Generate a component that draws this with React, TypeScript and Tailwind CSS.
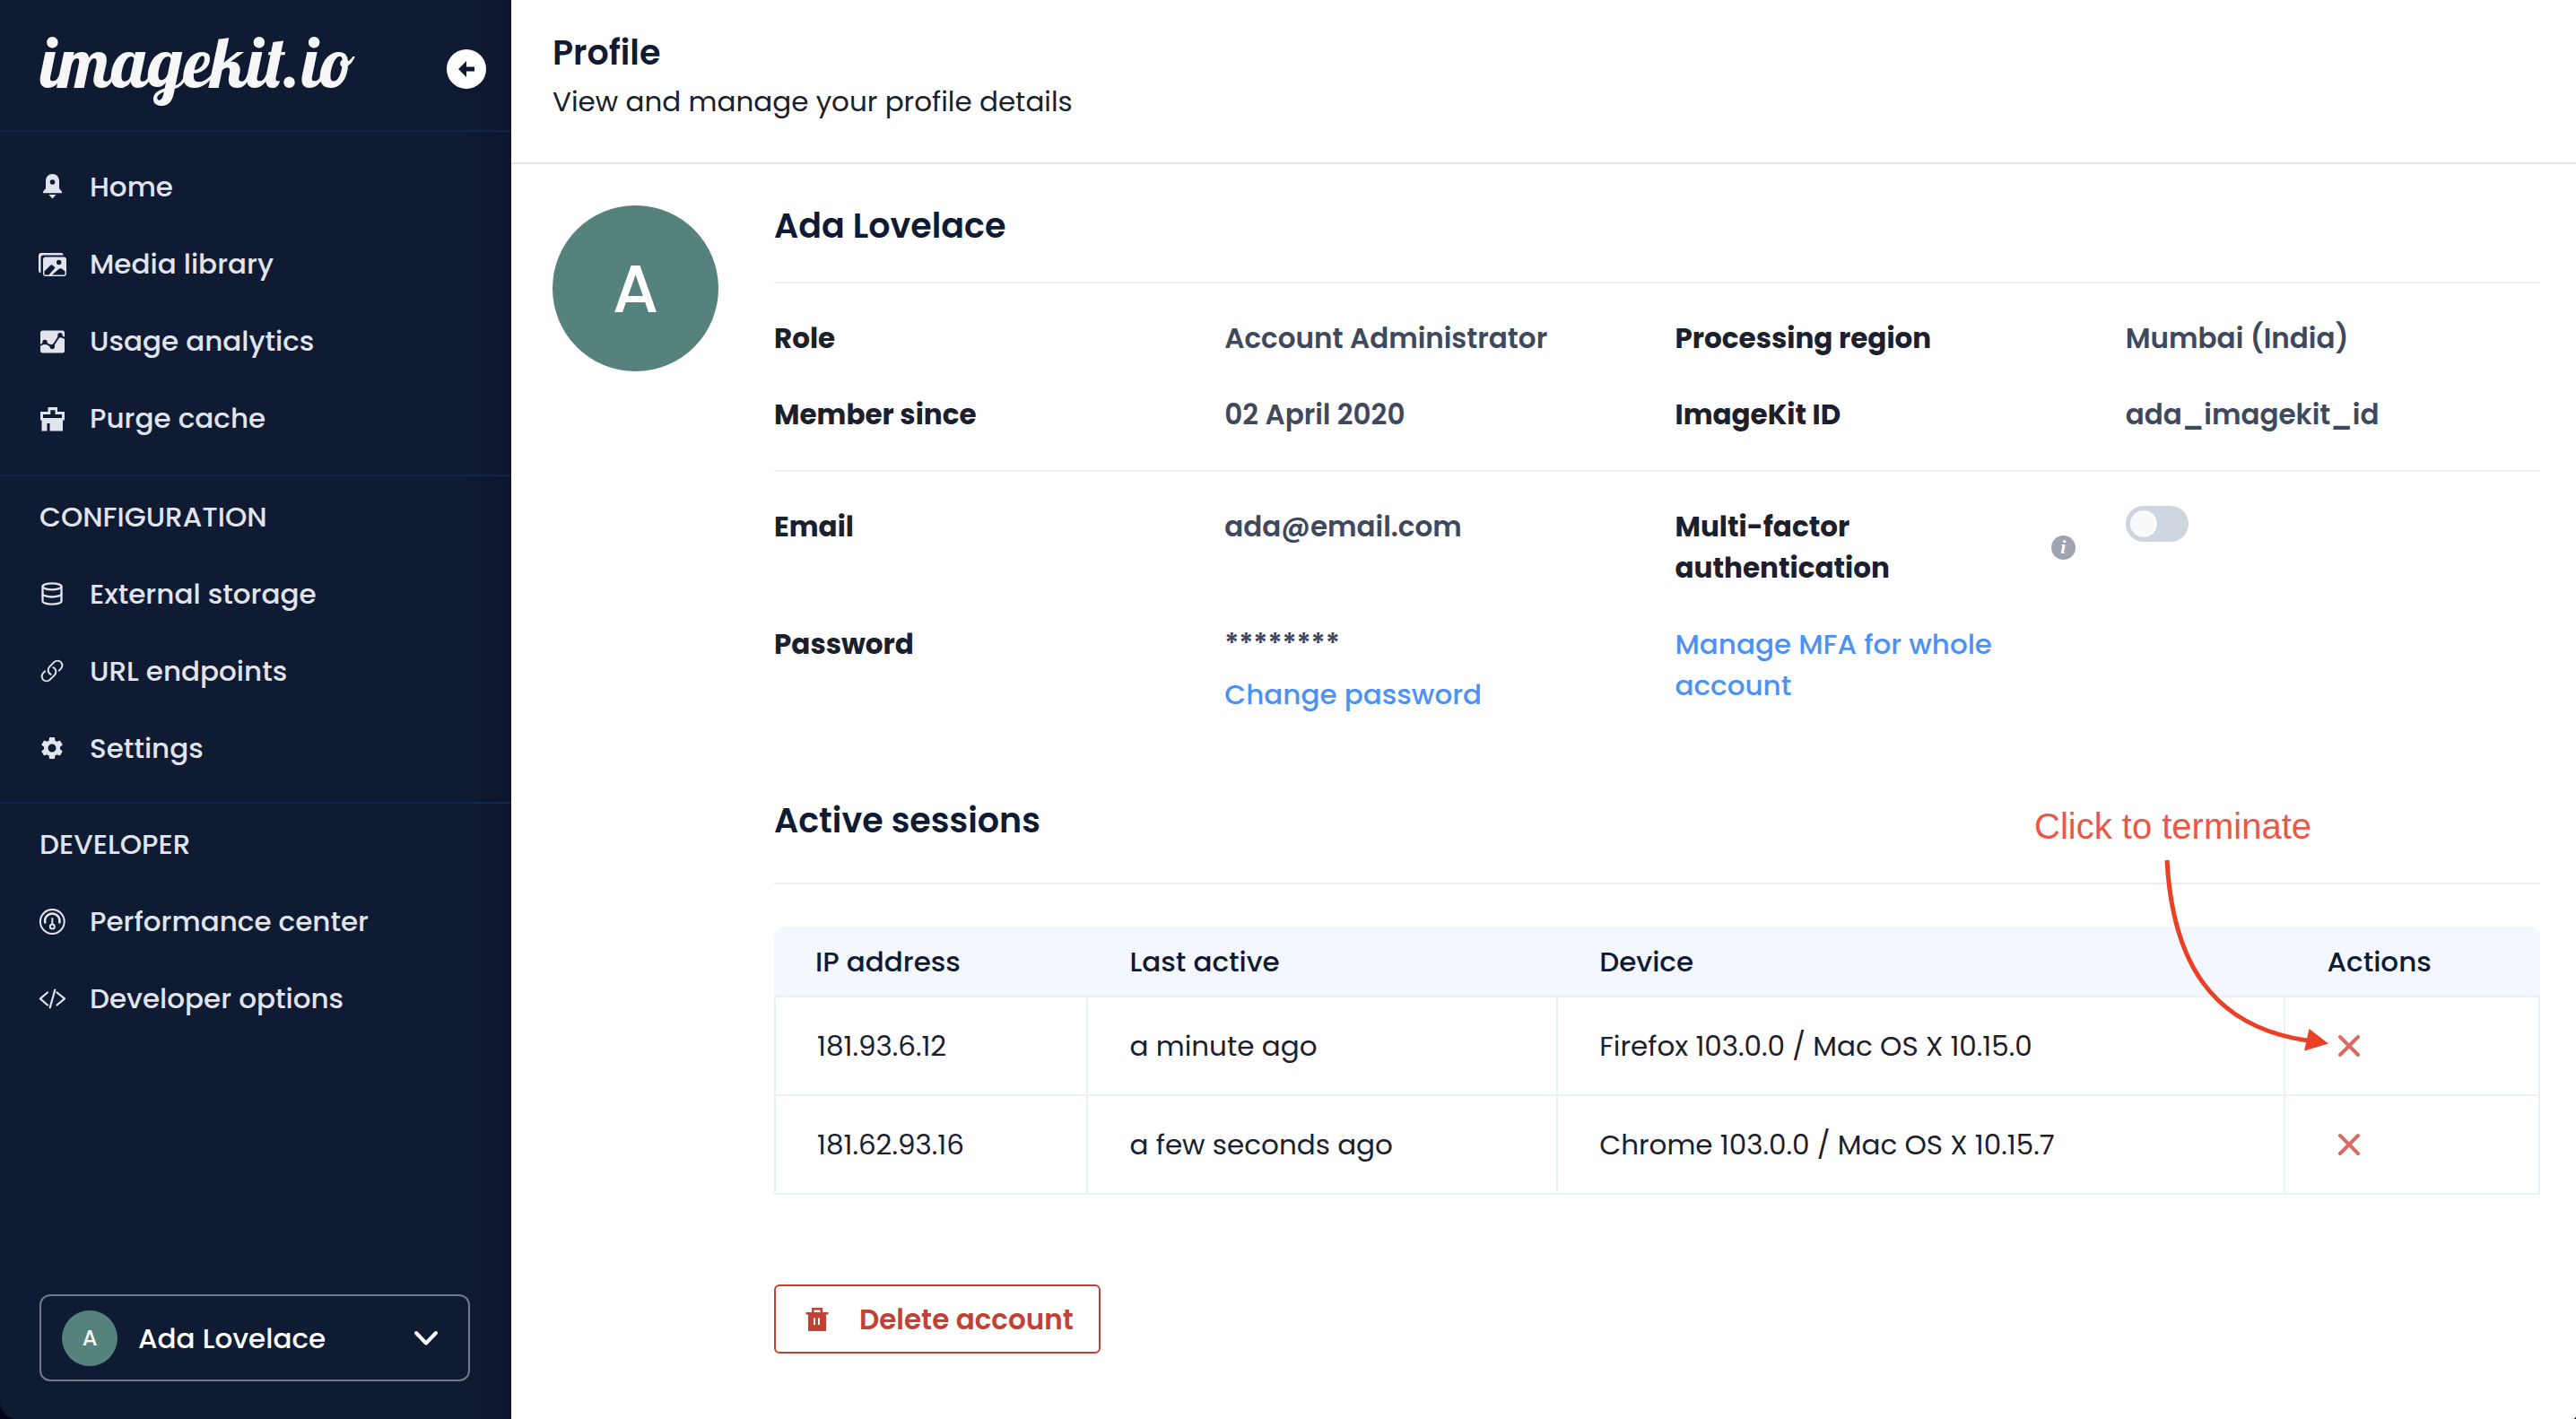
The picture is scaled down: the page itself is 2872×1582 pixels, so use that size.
import type { ReactNode } from "react";
import { Database } from "lucide-react";
import { MdSettings } from "react-icons/md";

function RocketIcon() {
  return (
    <svg viewBox="0 0 32 32" className="size-8" fill="currentColor" aria-hidden="true">
      <path
        fillRule="evenodd"
        d="M16.500 2C12 2 9 5.500 9 10v8c0 1-3 2.500-3 4v1.300h21V22c0-1.500-3-3-3-4v-8c0-4.500-3-8-7.500-8Zm0 6.200a2.800 2.800 0 1 1 0 5.600 2.800 2.800 0 0 1 0-5.600Z"
      />
      <path d="M12.500 25h8l-4 4.500Z" />
    </svg>
  );
}

function MediaIcon() {
  return (
    <svg viewBox="0 0 32 32" className="size-8" aria-hidden="true">
      <path d="M28.500 6.500V6a2 2 0 0 0-2-2H4a3 3 0 0 0-3 3v17a3 3 0 0 0 2.500 2.500V9.500a3 3 0 0 1 3-3Z" fill="currentColor" />
      <rect x="6" y="8.500" width="26" height="21.500" rx="3" fill="currentColor" />
      <circle cx="23.700" cy="14.500" r="2.700" fill="#0f1a33" />
      <path d="M7.500 24.500 14 18q1.500-1.500 3 0l2.500 2.500L12.500 28.500h-4a1 1 0 0 1-1-1Z" fill="#0f1a33" />
      <path d="M16 28.500 23.500 22q2-1.500 4 0l3 2.500v3a1 1 0 0 1-1 1Z" fill="#0f1a33" />
    </svg>
  );
}

function AnalyticsIcon() {
  return (
    <svg viewBox="0 0 32 32" className="size-8" aria-hidden="true">
      <rect x="3" y="4.500" width="27" height="25" rx="2.500" fill="currentColor" />
      <path d="M3 21 8 18l8.300 4.700L24.500 10l5.500 3" fill="none" stroke="#0f1a33" strokeWidth="2" />
      <g fill="#0f1a33">
        <circle cx="8" cy="17.500" r="2.700" />
        <circle cx="16.300" cy="22.500" r="2.700" />
        <circle cx="25" cy="9.800" r="2.700" />
      </g>
    </svg>
  );
}

function PurgeIcon() {
  return (
    <svg viewBox="0 0 32 32" className="size-8" fill="currentColor" aria-hidden="true">
      <path fillRule="evenodd" d="M11.500 4h10.500v5h8v9.500H3V9h8.500Zm2.800 3.300V12H6v4h21v-4h-7.500V7.300Z" />
      <path d="M4.500 18h23.500v12.500H13.500V22h-3v8.500h-6Z" />
    </svg>
  );
}

function LinkIcon() {
  return (
    <svg viewBox="0 0 24 24" className="size-7" fill="none" stroke="currentColor" strokeWidth="1.700" strokeLinecap="round" strokeLinejoin="round" aria-hidden="true">
      <path d="M13.190 8.688a4.500 4.500 0 0 1 1.242 7.244l-4.500 4.500a4.500 4.500 0 0 1-6.364-6.364l1.757-1.757m13.350-.622 1.757-1.757a4.500 4.500 0 0 0-6.364-6.364l-4.500 4.500a4.500 4.500 0 0 0 1.242 7.244" />
    </svg>
  );
}

function GaugeIcon() {
  return (
    <svg viewBox="0 0 32 32" className="size-8" fill="none" stroke="currentColor" strokeWidth="2" strokeLinecap="round" aria-hidden="true">
      <circle cx="16.300" cy="16.500" r="13.400" />
      <path strokeWidth="2.500" d="M8.300 17.500a8.200 8.200 0 1 1 16 0" />
      <path d="M16.300 13v6" />
      <circle cx="16.300" cy="22" r="2.500" />
    </svg>
  );
}

function CodeIcon() {
  return (
    <svg viewBox="0 0 32 32" className="size-8" fill="none" stroke="currentColor" strokeWidth="2.200" strokeLinecap="round" strokeLinejoin="round" aria-hidden="true">
      <path d="M11 9.500 2.800 16.300 11 23.500M21.500 9.500l8.500 6.800-8.500 7.200M19.300 6.500l-5.600 20" />
    </svg>
  );
}

function TrashIcon() {
  return (
    <svg viewBox="0 0 26 28" className="h-7 w-[26px]" fill="currentColor" aria-hidden="true">
      <path
        fillRule="evenodd"
        d="M7 1h12v5h6.500v2.500H23V27H3V8.500H.5V6H7Zm2.500 2.500V6h7V3.500Zm-.5 9V20h2v-7.500Zm5 0V20h2v-7.500Z"
      />
    </svg>
  );
}

function NavItem({ icon, label }: { icon: ReactNode; label: string }) {
  return (
    <li>
      <a href="#" className="flex h-[86px] items-center gap-[26px] px-[42px]">
        <span className="flex size-8 items-center justify-center">{icon}</span>
        {label}
      </a>
    </li>
  );
}

function NavSection({ title, children }: { title?: string; children: ReactNode }) {
  return (
    <section>
      {title && <h2 className="flex h-[86px] items-center px-11">{title}</h2>}
      <ul>{children}</ul>
    </section>
  );
}

function Sidebar() {
  return (
    <aside className="flex w-[570px] shrink-0 flex-col rounded-bl-[20px] bg-[#0f1a33] bg-linear-to-r from-transparent from-90% to-[#0d162c] font-medium text-[#e1e4ed]">
      <div className="flex h-[147px] items-center justify-between border-b-2 border-[#15244b] pr-7 pl-11">
        <a href="#" className="pb-2 font-['Lobster_Two','Liberation_Serif',serif] text-[78px] leading-none font-bold text-[#f6f6f6] italic">
          imagekit.io
        </a>
        <button type="button" aria-label="Collapse sidebar" className="mt-2 flex size-11 items-center justify-center rounded-full bg-white text-[#0f1a33]">
          <svg viewBox="0 0 18 18" className="size-[18px]" fill="currentColor" aria-hidden="true">
            <path d="M0 9 9 0v6.500h9v5H9V18Z" />
          </svg>
        </button>
      </div>
      <nav className="flex flex-col">
        <div className="border-b-2 border-[#15244b] pt-[18px] pb-5">
          <NavSection>
            <NavItem icon={<RocketIcon />} label="Home" />
            <NavItem icon={<MediaIcon />} label="Media library" />
            <NavItem icon={<AnalyticsIcon />} label="Usage analytics" />
            <NavItem icon={<PurgeIcon />} label="Purge cache" />
          </NavSection>
        </div>
        <div className="border-b-2 border-[#15244b] pt-0.5 pb-[17px]">
          <NavSection title="CONFIGURATION">
            <NavItem icon={<Database className="size-7" strokeWidth={2} />} label="External storage" />
            <NavItem icon={<LinkIcon />} label="URL endpoints" />
            <NavItem icon={<MdSettings className="size-[30px]" />} label="Settings" />
          </NavSection>
        </div>
        <div className="pt-0.5">
          <NavSection title="DEVELOPER">
            <NavItem icon={<GaugeIcon />} label="Performance center" />
            <NavItem icon={<CodeIcon />} label="Developer options" />
          </NavSection>
        </div>
      </nav>
      <button type="button" className="mt-auto mr-[46px] mb-[42px] ml-11 flex h-[97px] items-center rounded-xl border-2 border-[#737987] pr-[33px] pl-[23px] text-white">
        <span className="flex size-[62px] items-center justify-center rounded-full bg-[#55827c] text-[24px]">A</span>
        <span className="ml-[23px]">Ada Lovelace</span>
        <svg viewBox="0 0 28 18" className="ml-auto h-[18px] w-7" fill="none" stroke="currentColor" strokeWidth="4" strokeLinecap="round" strokeLinejoin="round" aria-hidden="true">
          <path d="M3 3l11 11.500L25 3" />
        </svg>
      </button>
    </aside>
  );
}

function Label({ children }: { children: ReactNode }) {
  return <dt className="font-bold text-[#1b202c]">{children}</dt>;
}

function Value({ children }: { children: ReactNode }) {
  return <dd className="font-semibold text-[#3f495d]">{children}</dd>;
}

const sessions = [
  { ip: "181.93.6.12", active: "a minute ago", device: "Firefox 103.0.0 / Mac OS X 10.15.0" },
  { ip: "181.62.93.16", active: "a few seconds ago", device: "Chrome 103.0.0 / Mac OS X 10.15.7" },
];

function SessionsTable() {
  return (
    <table className="mt-[47px] w-full table-fixed border-separate border-spacing-0 text-left text-[#1b202c]">
      <colgroup>
        <col className="w-[17.8%]" />
        <col className="w-[26.6%]" />
        <col className="w-[41.2%]" />
        <col className="w-[14.4%]" />
      </colgroup>
      <thead>
        <tr className="h-[79px] text-[#0f1a33] *:border-b-2 *:border-[#e9f1fd] *:bg-[#f4f7fe] *:pl-[46px] *:font-medium">
          <th scope="col" className="rounded-tl-xl">IP address</th>
          <th scope="col">Last active</th>
          <th scope="col">Device</th>
          <th scope="col" className="rounded-tr-xl">Actions</th>
        </tr>
      </thead>
      <tbody>
        {sessions.map((s) => (
          <tr key={s.ip} className="h-[110px] *:border-r-2 *:border-b-2 *:border-[#e9f1fd] *:pl-[46px]">
            <td className="border-l-2">{s.ip}</td>
            <td>{s.active}</td>
            <td>{s.device}</td>
            <td>
              <button type="button" aria-label={`Terminate session ${s.ip}`} className="flex size-[50px] items-center justify-center text-[#d86a62]">
                <svg viewBox="0 0 26 26" className="size-[26px]" fill="none" stroke="currentColor" strokeWidth="4" strokeLinecap="round" aria-hidden="true">
                  <path d="M3 3l20 20M23 3L3 23" />
                </svg>
              </button>
            </td>
          </tr>
        ))}
      </tbody>
    </table>
  );
}

function TerminateHint() {
  return (
    <div className="pointer-events-none absolute top-0 right-[236px] flex w-[328px] flex-col">
      <span className="font-['Liberation_Sans',sans-serif] text-[40px] leading-[58px] whitespace-nowrap text-[#ec5646]">Click to terminate</span>
      <svg viewBox="0 0 328 226" className="h-[226px] w-[328px]" aria-hidden="true">
        <path d="M148 9C154 120 196 194 304 210" fill="none" stroke="#ea4025" strokeWidth="5" />
        <path d="M306.500 197 328 213.500 301 221.500Z" fill="#ea4025" />
      </svg>
    </div>
  );
}

export default function App() {
  return (
    <div className="flex min-h-screen bg-[#08061a] font-['Poppins',Inter,sans-serif] text-[31px] leading-[46px]">
      <Sidebar />
      <main className="min-w-0 flex-1 rounded-br-sm bg-white">
        <header className="border-b-2 border-[#e4e5ec] pt-[31px] pb-[42px] pl-[46px]">
          <h1 className="text-[38px] leading-[56px] font-semibold text-[#0f1a33]">Profile</h1>
          <p className="leading-[52px] text-[#1b202c]">View and manage your profile details</p>
        </header>
        <div className="flex gap-[62px] pt-[46px] pr-10 pl-[46px]">
          <div className="flex size-[185px] shrink-0 items-center justify-center rounded-full bg-[#55827c] text-[74px] font-medium text-white">A</div>
          <div className="min-w-0 flex-1">
            <section>
              <h2 className="border-b-2 border-[#edf0f5] pb-[39px] text-[38px] font-semibold text-[#0f1a33]">Ada Lovelace</h2>
              <dl className="grid grid-cols-4 gap-x-10 gap-y-[39px] border-b-2 border-[#edf0f5] pt-[38px] pb-[39px]">
                <Label>Role</Label>
                <Value>Account Administrator</Value>
                <Label>Processing region</Label>
                <Value>Mumbai (India)</Value>
                <Label>Member since</Label>
                <Value>02 April 2020</Value>
                <Label>ImageKit ID</Label>
                <Value>ada_imagekit_id</Value>
              </dl>
              <dl className="grid grid-cols-4 gap-x-10 gap-y-[39px] pt-[38px]">
                <Label>Email</Label>
                <Value>ada@email.com</Value>
                <Label>
                  <span className="flex items-center justify-between gap-8 pr-4">
                    <label htmlFor="mfa" className="max-w-[320px]">Multi-factor authentication</label>
                    <button type="button" aria-label="About multi-factor authentication" className="flex size-[27px] shrink-0 items-center justify-center rounded-full bg-[#9fa4b0] font-['Liberation_Serif',serif] text-[22px] leading-none text-white italic">
                      i
                    </button>
                  </span>
                </Label>
                <dd>
                  <input
                    id="mfa"
                    type="checkbox"
                    role="switch"
                    className="block h-10 w-[70px] appearance-none rounded-full bg-[#cdd5df] p-[5px] before:block before:size-[30px] before:rounded-full before:bg-[#f8fafc]"
                  />
                </dd>
                <Label>Password</Label>
                <Value>
                  <span className="block">********</span>
                  <a href="#" className="mt-2.5 block font-medium text-[#4d92f3]">Change password</a>
                </Value>
                <dd className="font-medium text-[#4d92f3]">
                  <a href="#" className="block max-w-[400px]">Manage MFA for whole account</a>
                </dd>
              </dl>
            </section>
            <section className="relative mt-[95px]">
              <h2 className="border-b-2 border-[#edeef4] pb-[46px] text-[38px] font-semibold text-[#0f1a33]">Active sessions</h2>
              <SessionsTable />
              <TerminateHint />
            </section>
            <button type="button" className="mt-[100px] flex h-[77px] items-center gap-[34px] rounded-md border-2 border-[#c24134] pr-7 pl-[33px] font-semibold text-[#c24134]">
              <TrashIcon />
              Delete account
            </button>
          </div>
        </div>
      </main>
    </div>
  );
}
